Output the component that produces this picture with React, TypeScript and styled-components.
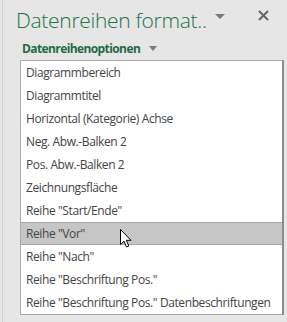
import { createGlobalStyle } from 'styled-components'
import styled from 'styled-components'

const GlobalStyle = createGlobalStyle`
  html, body {
    margin: 0;
    padding: 0;
    background: #e6e6e6;
  }
  body {
    font-family: "Open Sans", "Noto Sans", sans-serif;
  }
`

const Pane = styled.div`
  width: 285px;
  height: 322px;
  margin-left: 2px;
  border-left: 1px solid #d2d2d2;
  box-sizing: border-box;
  position: relative;
`

const TitleRow = styled.div`
  display: flex;
  align-items: center;
  height: 36px;
  padding: 4px 0 0 13px;
  box-sizing: border-box;
`

const Title = styled.div`
  color: #217346;
  font-size: 21px;
  font-weight: 300;
  letter-spacing: -0.3px;
  white-space: nowrap;
`

const TitleArrow = styled.svg`
  margin-left: 8px;
  margin-top: -8px;
`

const CloseButton = styled.svg`
  margin-left: auto;
  margin-right: 18px;
  margin-top: -10px;
`

const OptionsRow = styled.div`
  display: flex;
  align-items: center;
  gap: 9px;
  height: 24px;
  padding-left: 19px;
`

const OptionsLabel = styled.span`
  color: #1e6b3f;
  font-size: 12px;
  font-weight: 700;
  letter-spacing: -0.6px;
`

const ListBox = styled.div`
  margin-left: 17px;
  width: 264px;
  background: #fff;
  border: 1px solid #a9a9a9;
  border-right: 2px solid #8c8c8c;
  box-sizing: border-box;
  display: flex;
  flex-direction: column;
`

const Item = styled.div<{ $active?: boolean }>`
  height: 23px;
  box-sizing: border-box;
  display: flex;
  align-items: center;
  padding-left: 5px;
  font-size: 12px;
  letter-spacing: -0.4px;
  color: #444;
  white-space: nowrap;
  background: ${p => (p.$active ? '#c6c6c6' : 'transparent')};
  border-top: 1px solid ${p => (p.$active ? '#a6a6a6' : 'transparent')};
  border-bottom: 1px solid ${p => (p.$active ? '#a6a6a6' : 'transparent')};
`

const Cursor = styled.svg`
  position: absolute;
  left: 117px;
  top: 229px;
`

const items = [
  'Diagrammbereich',
  'Diagrammtitel',
  'Horizontal (Kategorie) Achse',
  'Neg. Abw.-Balken 2',
  'Pos. Abw.-Balken 2',
  'Zeichnungsfläche',
  'Reihe "Start/Ende"',
  'Reihe "Vor"',
  'Reihe "Nach"',
  'Reihe "Beschriftung Pos."',
  'Reihe "Beschriftung Pos." Datenbeschriftungen',
]

const App = () => {
  return <>
    <GlobalStyle />
    <Pane>
      <TitleRow>
        <Title>Datenreihen format..</Title>
        <TitleArrow width="10" height="5" viewBox="0 0 10 5">
          <path d="M0 0 L10 0 L5 5 Z" fill="#777" />
        </TitleArrow>
        <CloseButton width="11" height="11" viewBox="0 0 11 11">
          <path d="M1 1 L10 10 M10 1 L1 10" stroke="#666" strokeWidth="2" />
        </CloseButton>
      </TitleRow>
      <OptionsRow>
        <OptionsLabel>Datenreihenoptionen</OptionsLabel>
        <svg width="8" height="5" viewBox="0 0 8 5">
          <path d="M0 0 L8 0 L4 5 Z" fill="#7a7a7a" />
        </svg>
      </OptionsRow>
      <ListBox>
        {items.map(it => <Item key={it} $active={it === 'Reihe "Vor"'}>{it}</Item>)}
      </ListBox>
      <Cursor width="12" height="19" viewBox="0 0 12 19">
        <path d="M0.5 0.5 L0.5 15.5 L4 12.2 L6.5 18 L8.8 17 L6.3 11.3 L11 11.3 Z" fill="#fff" stroke="#000" strokeWidth="1" />
      </Cursor>
    </Pane>
  </>
}

export default App
